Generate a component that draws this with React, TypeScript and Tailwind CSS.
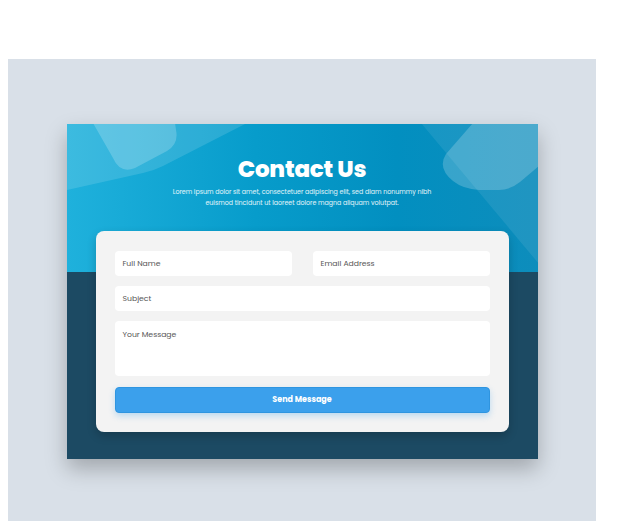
import React from "react";

const font = { fontFamily: "Poppins, Inter, 'Noto Sans', sans-serif" };

function Input({ label, className = "" }: { label: string; className?: string }) {
  return (
    <div className={`bg-white rounded-[4px] flex items-center pl-[8px] text-[7.7px] text-[#555] ${className}`}>
      {label}
    </div>
  );
}

export default function App() {
  return (
    <div className="h-[521px] bg-white overflow-hidden" style={font}>
      <div className="ml-[8px] mt-[59px] w-[588px] bg-[#d9e0e8] pt-[65px] pb-[62px] flex justify-center">
        <div className="w-[471px] bg-[#1c4a63] shadow-[0_10px_20px_rgba(0,0,0,0.25)] flex flex-col">
          <div className="relative h-[148px] overflow-hidden bg-[linear-gradient(90deg,#1fb1dc_0%,#079ccb_40%,#028fc0_70%,#0d8dbc_100%)]">
            <svg className="absolute inset-0" width="471" height="148" viewBox="0 0 471 148">
              <path d="M0 66 L76 49 Q86 47 96 42 L180 -1 L0 -1 Z" fill="white" fillOpacity="0.13" />
              <path d="M26 -1 L46 34 Q53 50 68 44 L100 27 Q112 20 109 6 L108 -1 Z" fill="white" fillOpacity="0.2" />
              <path d="M354 -1 L472 -1 L472 140 Z" fill="white" fillOpacity="0.08" />
              <path d="M406 -1 L379 30 Q370 44 386 57 Q396 65 412 66 L432 66 Q443 66 453 58 L472 42 L472 -1 Z" fill="white" fillOpacity="0.2" />
            </svg>
            <div className="relative flex flex-col items-center pt-[30px] text-white">
              <div className="text-[23px] leading-[30px] font-extrabold tracking-[-0.2px]">Contact Us</div>
              <div className="mt-[2px] text-[6.3px] leading-[11px] text-center text-white/90 w-[264px]">
                Lorem ipsum dolor sit amet, consectetuer adipiscing elit, sed diam nonummy nibh euismod tincidunt ut laoreet dolore magna aliquam volutpat.
              </div>
            </div>
          </div>
          <div className="mx-[29px] -mt-[41px] mb-[27px] relative bg-[#f3f3f3] rounded-[8px] px-[19px] pt-[20px] pb-[19px] shadow-[0_4px_10px_rgba(0,0,0,0.2)] flex flex-col gap-[10px]">
            <div className="flex gap-[21px]">
              <Input label="Full Name" className="flex-1 h-[25px]" />
              <Input label="Email Address" className="flex-1 h-[25px]" />
            </div>
            <Input label="Subject" className="h-[25px]" />
            <div className="bg-white rounded-[4px] h-[55px] pl-[8px] pt-[8px] text-[7.7px] text-[#555]">Your Message</div>
            <button className="mt-[1px] h-[26px] rounded-[4px] bg-[#3ba0ec] border border-[#2f95e0] text-white text-[8px] font-bold shadow-[0_3px_6px_rgba(59,160,236,0.3)]">
              Send Message
            </button>
          </div>
        </div>
      </div>
    </div>
  );
}
